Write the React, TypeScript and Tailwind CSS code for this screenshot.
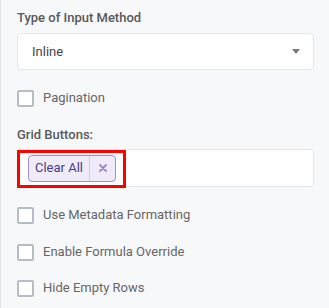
import React from "react";

function Checkbox({ label }: { label: string }) {
  return (
    <div className="flex h-[20px] items-center">
      <div className="h-[17px] w-[17px] rounded-[2px] border-2 border-[#b6bdc6] bg-white" />
      <span className="ml-[9px] text-[13px] text-[#666666] leading-4">{label}</span>
    </div>
  );
}

export default function App() {
  return (
    <div
      className="h-[308px] w-[329px] border-l border-[#e1e4e8] bg-[#f7f8fa] pl-4 pr-[15px] pt-[10px]"
      style={{ fontFamily: "Roboto, 'Noto Sans', sans-serif" }}
    >
      <div className="h-4 text-[13px] font-medium leading-4 text-[#595959]">Type of Input Method</div>
      <div className="mt-[7px] flex h-[37px] items-center justify-between rounded-[4px] border border-[#e3e6ea] bg-white pl-[14px] pr-[13px]">
        <span className="text-[13px] text-[#444444]">Inline</span>
        <svg width="8" height="5" viewBox="0 0 8 5">
          <path d="M0 0 L8 0 L4 5 Z" fill="#7a7a7a" />
        </svg>
      </div>
      <div className="mt-[18px]">
        <Checkbox label="Pagination" />
      </div>
      <div className="mt-[19px] h-4 text-[13px] font-medium leading-4 text-[#595959]">Grid Buttons:</div>
      <div className="relative mt-[6px] flex h-[38px] items-center rounded-[4px] border border-[#e3e6ea] bg-white pl-[10px]">
        <div className="flex h-[27px] items-center rounded-[4px] border border-[#a38ed4] bg-[#efebf8]">
          <span className="px-[6px] text-[13px] text-[#4b3c86]">Clear All</span>
          <div className="h-full w-px bg-[#d3c9ec]" />
          <span className="flex w-[25px] items-center justify-center">
            <svg width="8" height="8" viewBox="0 0 8 8">
              <path d="M1 1 L7 7 M7 1 L1 7" stroke="#9a85cc" strokeWidth="1.8" strokeLinecap="round" />
            </svg>
          </span>
        </div>
        <div className="absolute left-[-1px] top-0 h-[38px] w-[109px] border-[3px] border-[#ff0000]" />
      </div>
      <div className="mt-[18px]">
        <Checkbox label="Use Metadata Formatting" />
      </div>
      <div className="mt-[17px]">
        <Checkbox label="Enable Formula Override" />
      </div>
      <div className="mt-[16px]">
        <Checkbox label="Hide Empty Rows" />
      </div>
    </div>
  );
}
